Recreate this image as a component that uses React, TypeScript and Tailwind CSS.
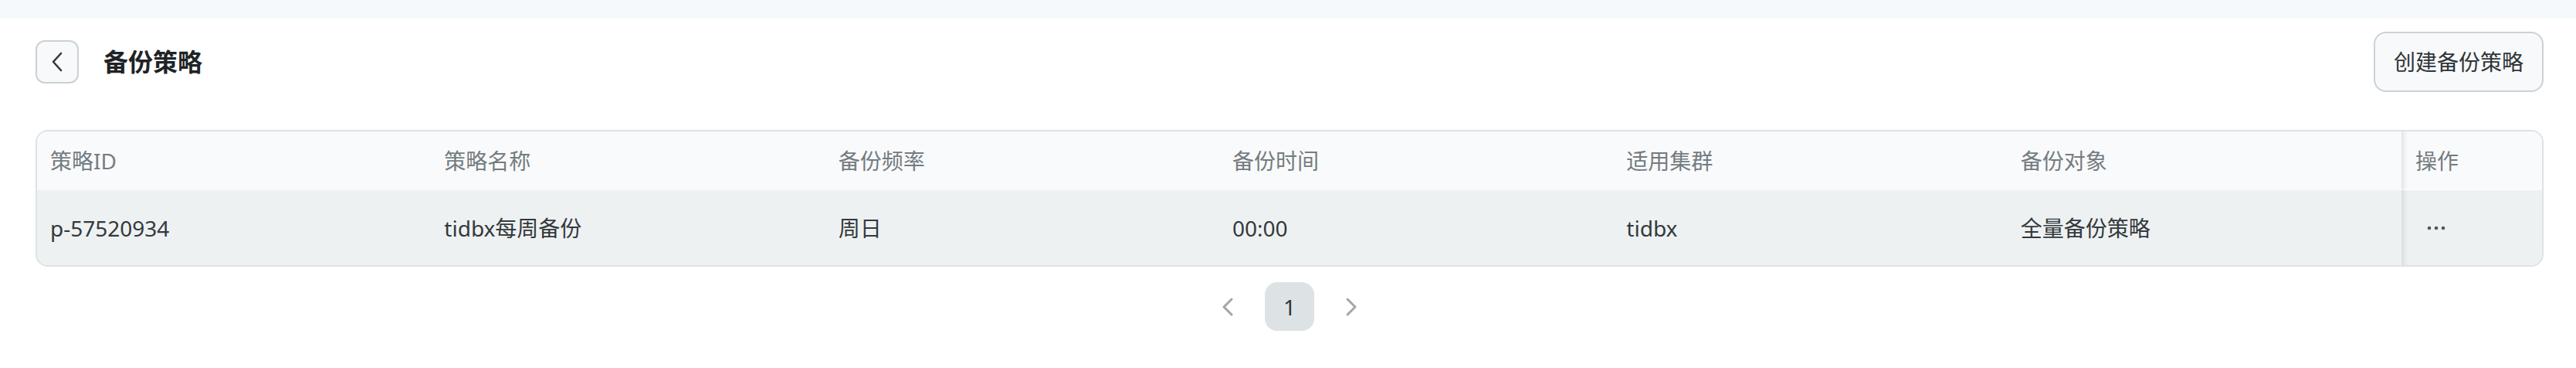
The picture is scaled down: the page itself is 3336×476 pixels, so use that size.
import React from 'react'

const columns = ['策略ID', '策略名称', '备份频率', '备份时间', '适用集群', '备份对象']

const rows = [
    ['p-57520934', 'tidbx每周备份', '周日', '00:00', 'tidbx', '全量备份策略'],
]

const BackIcon = () => (
    <svg width="16" height="26" viewBox="0 0 16 26" fill="none">
        <path d="M13 2 L3 13 L13 24" stroke="#33393d" strokeWidth="2.6" strokeLinecap="round" strokeLinejoin="round" />
    </svg>
)

const PagerArrow = ({ dir }: { dir: 'left' | 'right' }) => (
    <svg width="18" height="26" viewBox="0 0 18 26" fill="none">
        <path
            d={dir === 'left' ? 'M14 3 L4 13 L14 23' : 'M4 3 L14 13 L4 23'}
            stroke="#a3a6a8"
            strokeWidth="3"
            strokeLinecap="round"
            strokeLinejoin="round"
        />
    </svg>
)

const MoreDots = () => (
    <svg width="24" height="6" viewBox="0 0 24 6">
        <circle cx="3" cy="3" r="2.3" fill="#51585c" />
        <circle cx="12" cy="3" r="2.3" fill="#51585c" />
        <circle cx="21" cy="3" r="2.3" fill="#51585c" />
    </svg>
)

const App: React.FC = () => {
    return (
        <div className="min-h-screen bg-white font-['Noto_Sans','Noto_Sans_CJK_SC',sans-serif]">
            <div className="h-[24px] bg-[#f5f9fc]" />

            <div className="pl-[46px] pr-[42px]">
                {/* page header */}
                <div className="mt-[17px] flex h-[78px] items-center justify-between">
                    <div className="flex items-center gap-[32px]">
                        <button className="flex h-[56px] w-[56px] items-center justify-center rounded-[12px] border-2 border-[#cbd2d6] bg-[#f8f9fa]">
                            <BackIcon />
                        </button>
                        <h1 className="text-[32px] font-bold leading-none text-[#1f2326]">备份策略</h1>
                    </div>
                    <button className="h-[78px] rounded-[16px] border-2 border-[#cbd2d6] bg-[#f8f9fa] px-[24px] text-[28px] leading-none text-[#2f3538]">
                        创建备份策略
                    </button>
                </div>

                {/* table */}
                <div className="mt-[49px] overflow-hidden rounded-[16px] border-2 border-[#dde3e5]">
                    <div className="grid h-[76px] grid-cols-[repeat(6,minmax(0,1fr))_182px] bg-[#f9fafb]">
                        {columns.map(col => (
                            <div key={col} className="flex items-center px-[17px] text-[28px] text-[#737c81]">
                                {col}
                            </div>
                        ))}
                        <div className="flex items-center border-b border-white px-[18px] text-[28px] text-[#737c81] shadow-[inset_10px_0_10px_-10px_rgba(0,0,0,0.18)]">
                            操作
                        </div>
                    </div>
                    {rows.map(row => (
                        <div key={row[0]} className="grid h-[97px] grid-cols-[repeat(6,minmax(0,1fr))_182px] bg-[#eef1f2]">
                            {row.map((cell, i) => (
                                <div key={i} className="flex items-center px-[17px] text-[28px] text-[#33393c]">
                                    {cell}
                                </div>
                            ))}
                            <div className="flex items-center px-[33px] shadow-[inset_10px_0_10px_-10px_rgba(0,0,0,0.18)]">
                                <MoreDots />
                            </div>
                        </div>
                    ))}
                </div>

                {/* pagination */}
                <div className="mt-[20px] flex justify-center gap-[16px]">
                    <button className="flex h-[63px] w-[64px] items-center justify-center">
                        <PagerArrow dir="left" />
                    </button>
                    <button className="flex h-[63px] w-[64px] items-center justify-center rounded-[16px] bg-[#dde3e5] text-[28px] text-[#2f3538]">
                        1
                    </button>
                    <button className="flex h-[63px] w-[64px] items-center justify-center">
                        <PagerArrow dir="right" />
                    </button>
                </div>
            </div>
        </div>
    )
}

export default App
